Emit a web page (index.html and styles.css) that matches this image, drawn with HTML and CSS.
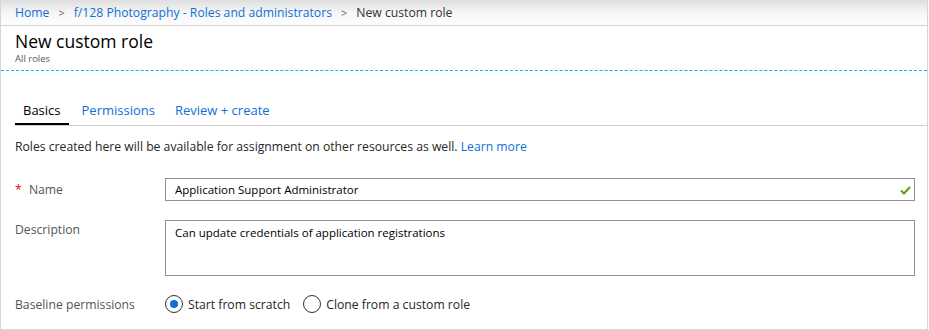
FILE: index.html
```html
<!DOCTYPE html>
<html lang="en">
  <head>
    <meta charset="UTF-8" />
    <meta name="viewport" content="width=device-width, initial-scale=1.0" />
    <title>New custom role</title>
    <link rel="stylesheet" href="styles.css">
  </head>
  <body>
    <div class="blade">
      <nav class="breadcrumb">
        <a href="#">Home</a>
        <span class="sep">&gt;</span>
        <a href="#">f/128 Photography - Roles and administrators</a>
        <span class="sep">&gt;</span>
        <span class="current">New custom role</span>
      </nav>

      <div class="header">
        <h1>New custom role</h1>
        <p>All roles</p>
      </div>

      <div class="content">
        <div class="tabs">
          <a href="#" class="tab active">Basics</a>
          <a href="#" class="tab">Permissions</a>
          <a href="#" class="tab">Review + create</a>
        </div>

        <form class="form">
          <p class="intro">
            Roles created here will be available for assignment on other resources as well.
            <a href="#">Learn more</a>
          </p>

          <div class="row">
            <label for="roleName"><span class="required">*</span> Name</label>
            <div class="field">
              <input type="text" id="roleName" value="Application Support Administrator" />
              <svg class="check" width="11" height="9" viewBox="0 0 11 9">
                <path d="M1 4.5 L4 7.5 L10 1" fill="none" stroke="#57a300" stroke-width="2" />
              </svg>
            </div>
          </div>

          <div class="row desc">
            <label for="roleDesc">Description</label>
            <div class="field">
              <textarea id="roleDesc">Can update credentials of application registrations</textarea>
            </div>
          </div>

          <div class="row baseline">
            <label>Baseline permissions</label>
            <div class="options">
              <label class="radio"><span class="dot checked"></span>Start from scratch</label>
              <label class="radio"><span class="dot"></span>Clone from a custom role</label>
            </div>
          </div>
        </form>
      </div>
    </div>
  </body>
</html>
```

FILE: styles.css
```css
* {
  margin: 0;
  padding: 0;
  box-sizing: border-box;
  font-family: "Open Sans", "Noto Sans", sans-serif;
}

body {
  background-color: white;
  color: #000;
}

a {
  color: #0f6fd7;
  text-decoration: none;
}

.blade {
  width: 928px;
  height: 330px;
  border: 1px solid #d6d6d6;
  border-top: none;
}

.breadcrumb {
  height: 26px;
  padding: 0 14px;
  display: flex;
  align-items: center;
  gap: 9px;
  font-size: 12.2px;
  background: linear-gradient(#dedede, #f6f6f6 50%, #fdfdfd);
  border-bottom: 1px solid #d4d4d4;
}

.breadcrumb .sep {
  color: #666;
  font-size: 11px;
}

.breadcrumb .current {
  color: #333;
}

.header {
  height: 45px;
  padding: 3px 14px 0;
  border-bottom: 1px dashed #00b7f0;
}

.header h1 {
  font-size: 17.5px;
  font-weight: normal;
  line-height: 24px;
}

.header p {
  font-size: 9.5px;
  color: #595959;
  line-height: 12px;
}

.content {
  padding-left: 14px;
}

.tabs {
  display: flex;
  margin-top: 27px;
  border-bottom: 1px solid #d0d0d0;
}

.tab {
  font-size: 13px;
  padding: 0 10px;
  line-height: 25px;
  border-bottom: 2px solid transparent;
}

.tab.active {
  color: #000;
  padding: 0 8px;
  border-bottom-color: #000;
}

.tab:nth-child(2) {
  margin-left: 3px;
}

.form {
  padding-right: 12px;
}

.intro {
  font-size: 12.2px;
  color: #262626;
  line-height: 16px;
  margin-top: 13px;
  margin-bottom: 23px;
}

.row {
  display: flex;
  margin-bottom: 19px;
}

.row > label {
  width: 150px;
  font-size: 12.2px;
  color: #555;
  padding-top: 3px;
}

.row.desc > label {
  padding-top: 1px;
}

.required {
  color: #e00b1c;
  margin-right: 4px;
}

.field {
  flex: 1;
  position: relative;
  display: flex;
}

.field input,
.field textarea {
  width: 100%;
  border: 1px solid #8f8f8f;
  font-size: 11.5px;
  color: #000;
  padding: 0 9px;
}

.field input {
  height: 23px;
}

.field textarea {
  height: 56px;
  padding-top: 4px;
  resize: none;
}

.check {
  position: absolute;
  right: 4px;
  top: 8px;
}

.baseline {
  margin-top: 9px;
  align-items: center;
}

.baseline > label {
  padding-top: 0;
}

.options {
  display: flex;
  gap: 13px;
  font-size: 12.2px;
  color: #262626;
}

.radio {
  display: flex;
  align-items: center;
  gap: 5px;
}

.dot {
  width: 18px;
  height: 18px;
  border: 1px solid #333;
  border-radius: 50%;
  display: flex;
  align-items: center;
  justify-content: center;
}

.dot.checked::after {
  content: "";
  width: 8px;
  height: 8px;
  border-radius: 50%;
  background-color: #0f6fd7;
}
```
